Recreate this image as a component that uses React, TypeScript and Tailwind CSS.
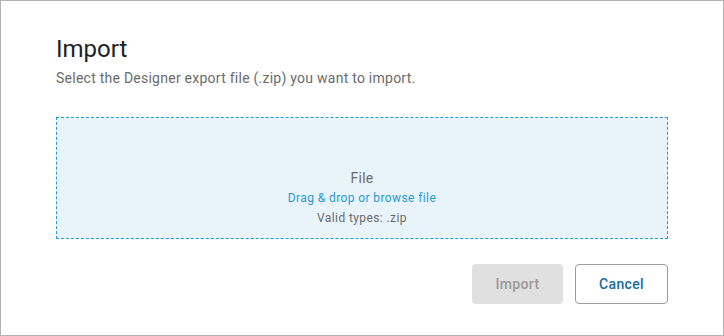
export default function App() {
    return (
        <div className="w-[724px] h-[336px] bg-white border border-[#b3b3b3] font-['Roboto',sans-serif]">
            <div className="pl-[55px] pr-[55px] pt-[34px]">
                <h2 className="text-[24px] leading-[28px] text-[#222]">Import</h2>
                <p className="mt-[6px] text-[14px] leading-[18px] tracking-[0.25px] text-[#6b6b6b]">
                    Select the Designer export file (.zip) you want to import.
                </p>
                <div className="mt-[30px] h-[122px] border border-dashed border-[#2a9ad6] bg-[#e8f4fa] flex flex-col items-center pt-[51px]">
                    <span className="text-[14px] leading-[18px] tracking-[0.25px] text-[#6b6b6b]">File</span>
                    <span className="mt-[3px] text-[12px] leading-[16px] tracking-[0.4px] text-[#2a9ad6] cursor-pointer">
                        Drag &amp; drop or browse file
                    </span>
                    <span className="mt-[4px] text-[12px] leading-[16px] tracking-[0.4px] text-[#6b6b6b]">
                        Valid types: .zip
                    </span>
                </div>
                <div className="mt-[25px] flex justify-end gap-[12px]">
                    <button
                        disabled
                        className="w-[91px] h-[40px] rounded-[4px] bg-[#e0e0e0] text-[14px] font-medium tracking-[0.35px] text-[#9a9a9a]"
                    >
                        Import
                    </button>
                    <button className="w-[93px] h-[40px] rounded-[4px] border border-[#9e9e9e] bg-white text-[14px] font-medium tracking-[0.35px] text-[#1a6b9c]">
                        Cancel
                    </button>
                </div>
            </div>
        </div>
    );
}
